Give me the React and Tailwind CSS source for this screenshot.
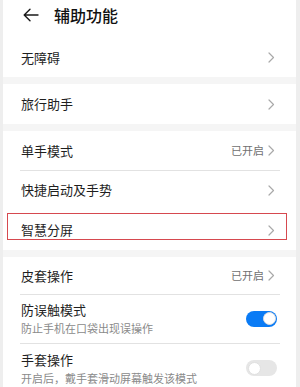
const FONT = { fontFamily: '"Noto Sans CJK SC", "Noto Sans", sans-serif' };

function Chevron() {
  return (
    <svg width="7" height="11" viewBox="0 0 7 11" fill="none" className="shrink-0">
      <path d="M1 1L5.5 5.5L1 10" stroke="#a9a9a9" strokeWidth="1.2" strokeLinecap="round" strokeLinejoin="round" />
    </svg>
  );
}

function Toggle({ on }) {
  return (
    <div
      className={`w-[31px] h-[16px] rounded-full flex items-center px-[1.5px] shrink-0 ${
        on ? "bg-[#0a7bf5] justify-end" : "bg-[#e6e6e6] justify-start"
      }`}
    >
      <div className="w-[13px] h-[13px] rounded-full bg-white border border-[#e0e0e0]" />
    </div>
  );
}

function Row({ label, value, sub, toggle, divider, h = "h-[40px]", highlight }) {
  return (
    <div className={`relative ${h} flex items-center pl-[18px] ${toggle === undefined ? "pr-[21px]" : "pr-[19px]"}`}>
      {divider && <div className="absolute top-0 left-[17px] right-[16px] h-px bg-[#e2e2e2]" />}
      <div className="flex-1 min-w-0">
        <p className="text-[13px] leading-[16px] text-[#1f1f1f]">{label}</p>
        {sub && <p className="text-[11px] leading-[14px] mt-[3px] text-[#8a8a8a] whitespace-nowrap">{sub}</p>}
      </div>
      {value && <span className="text-[11px] text-[#707070] mr-[4px]">{value}</span>}
      {toggle === undefined ? <Chevron /> : <Toggle on={toggle} />}
      {highlight && (
        <div className="absolute left-[4px] right-[9px] top-[3px] bottom-[10px] border border-[#d6494f]" />
      )}
    </div>
  );
}

export default function App() {
  return (
    <div style={FONT} className="w-[300px] h-[387px] overflow-hidden bg-[#eeeeee] px-[3px] pr-[4px]">
      <div className="bg-[#f5f5f5] h-full flex flex-col gap-[7px]">
        <div className="bg-white">
          <div className="h-[38px] flex items-center pb-[8px] pl-[20px]">
            <svg width="16" height="14" viewBox="0 0 16 14" fill="none">
              <path d="M15 7H1.5M7 1.2L1.2 7L7 12.8" stroke="#1a1a1a" strokeWidth="1.4" strokeLinecap="round" strokeLinejoin="round" />
            </svg>
            <h1 className="ml-[15px] text-[16px] font-medium text-[#111]">辅助功能</h1>
          </div>
          <Row label="无障碍" h="h-[39px]" />
        </div>
        <div className="bg-white">
          <Row label="旅行助手" />
        </div>
        <div className="bg-white">
          <Row label="单手模式" value="已开启" h="h-[39px]" />
          <Row label="快捷启动及手势" divider />
          <Row label="智慧分屏" highlight />
        </div>
        <div className="bg-white flex-1">
          <Row label="皮套操作" value="已开启" h="h-[37px]" />
          <Row label="防误触模式" sub="防止手机在口袋出现误操作" toggle={true} divider h="h-[49px]" />
          <Row label="手套操作" sub="开启后，戴手套滑动屏幕触发该模式" toggle={false} divider h="h-[50px]" />
        </div>
      </div>
    </div>
  );
}
